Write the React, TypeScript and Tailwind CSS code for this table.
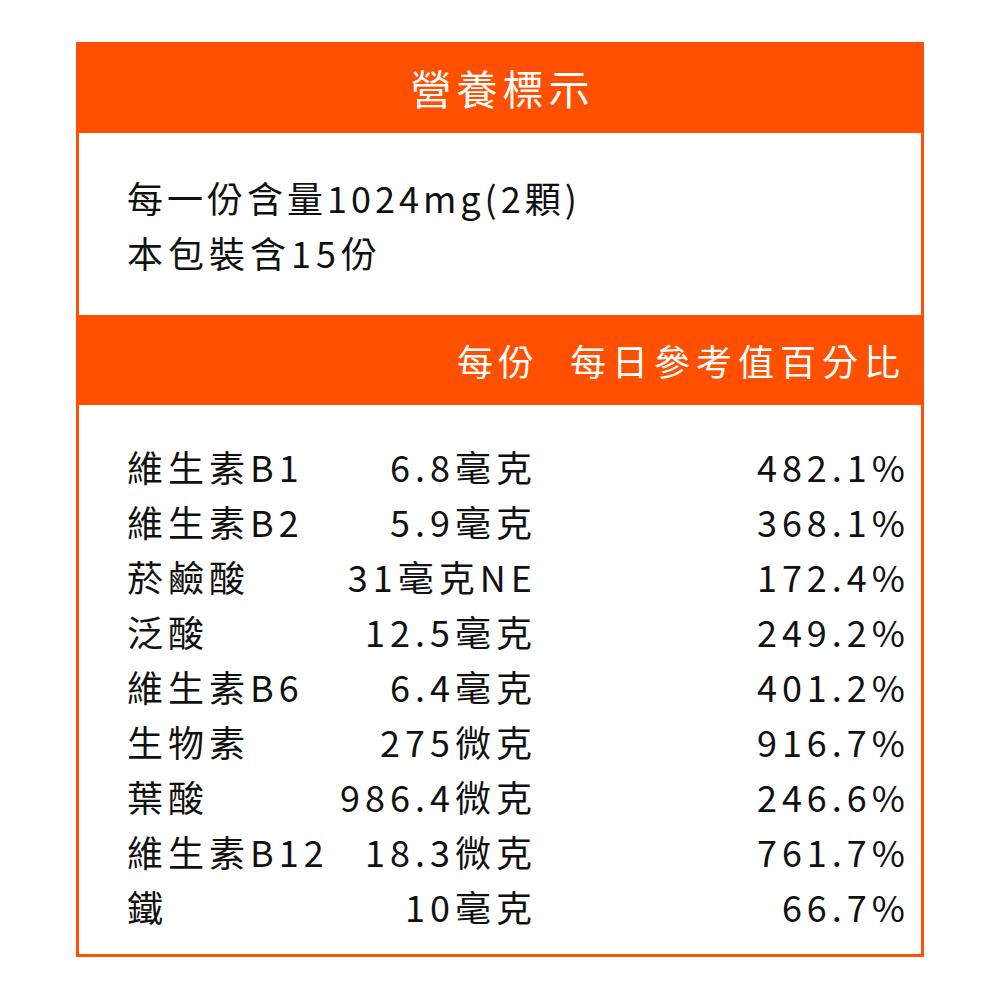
import React from "react";

const rows: [string, string, string][] = [
  ["維生素B1", "6.8毫克", "482.1%"],
  ["維生素B2", "5.9毫克", "368.1%"],
  ["菸鹼酸", "31毫克NE", "172.4%"],
  ["泛酸", "12.5毫克", "249.2%"],
  ["維生素B6", "6.4毫克", "401.2%"],
  ["生物素", "275微克", "916.7%"],
  ["葉酸", "986.4微克", "246.6%"],
  ["維生素B12", "18.3微克", "761.7%"],
  ["鐵", "10毫克", "66.7%"],
];

export default function App() {
  return (
    <div
      className="w-[1000px] h-[1000px] bg-white pt-[42px] pl-[76px]"
      style={{ fontFamily: '"Noto Sans CJK TC", "Noto Sans", sans-serif' }}
    >
      <div className="w-[848px] h-[915px] border-[3px] border-[#fe5000] flex flex-col">
        <div className="h-[91px] shrink-0 bg-[#fe5000] flex items-center justify-center text-white text-[41px] tracking-[5px] pl-[5px] -mt-[3px]">
          營養標示
        </div>
        <div className="h-[182px] shrink-0 pt-[37px] pl-[48px] text-[#111] text-[36px] leading-[55px]">
          <div className="tracking-[4px]">每一份含量1024mg(2顆)</div>
          <div className="tracking-[5px]">本包裝含15份</div>
        </div>
        <div className="h-[90px] shrink-0 bg-[#fe5000] flex items-center pl-[48px] pr-[15px] text-white text-[36px] tracking-[5px]">
          <div className="w-[200px]" />
          <div className="w-[212px] text-right">每份</div>
          <div className="flex-1 text-right tracking-[6px]">每日參考值百分比</div>
        </div>
        <div className="pt-[34px] pl-[48px] pr-[11px] text-[#111] text-[36px] leading-[55px] tracking-[5px]">
          {rows.map(([n, a, p]) => (
            <div key={n} className="flex">
              <div className="w-[200px] whitespace-nowrap">{n}</div>
              <div className="w-[210px] text-right whitespace-nowrap">{a}</div>
              <div className="flex-1 text-right whitespace-nowrap">{p}</div>
            </div>
          ))}
        </div>
      </div>
    </div>
  );
}
